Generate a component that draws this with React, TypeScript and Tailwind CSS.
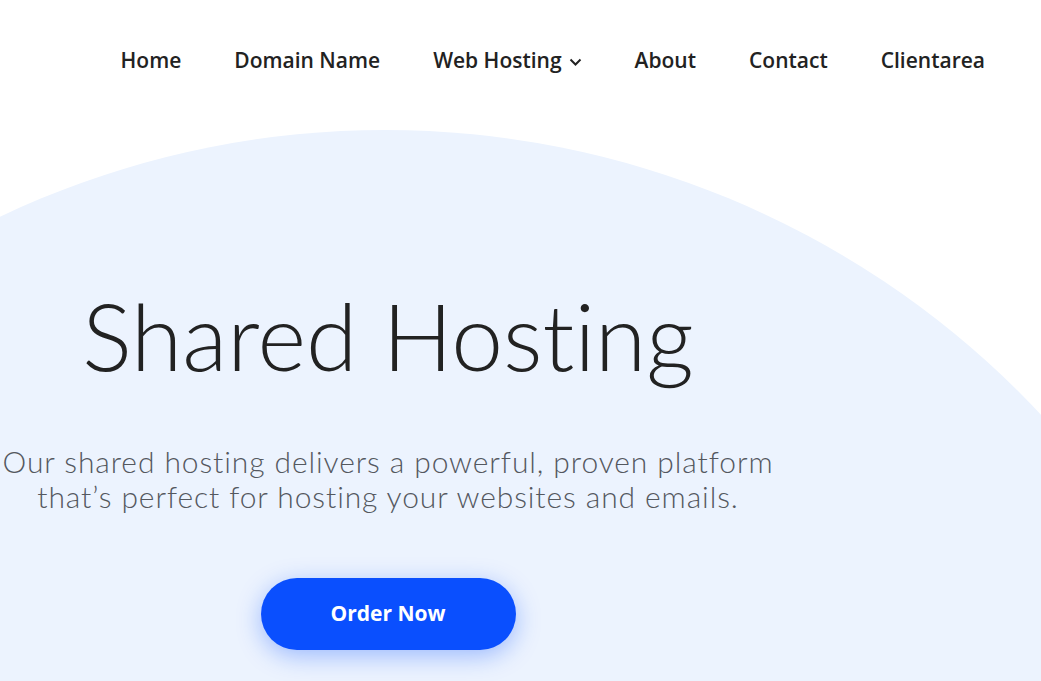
import React from "react";

export default function App() {
  const nav = ["Home", "Domain Name", "Web Hosting", "About", "Contact", "Clientarea"];
  return (
    <div className="relative h-[681px] w-full overflow-hidden bg-white">
      <div className="pointer-events-none absolute left-[-513px] top-[130px] h-[1796px] w-[1796px] rounded-full bg-[#ecf3fe]" />
      <div className="relative">
        <nav className="flex h-[122px] items-center justify-end gap-[53px] pr-[56px] font-['Open_Sans',sans-serif] text-[21px] font-semibold text-[#222222]">
          {nav.map((n) => (
            <a key={n} className="flex items-center gap-[7px]">
              <span>{n}</span>
              {n === "Web Hosting" && (
                <svg width="13" height="9" viewBox="0 0 13 9" fill="none" className="mt-[3px]">
                  <polyline points="1.5,1.5 6.5,6.5 11.5,1.5" stroke="#222" strokeWidth="2" />
                </svg>
              )}
            </a>
          ))}
        </nav>
        <div className="flex w-[776px] flex-col items-center text-center">
          <h1 className="mt-[167px] font-['Lato',sans-serif] text-[93px] font-light leading-none text-[#222222] [font-variant-ligatures:none]">
            Shared Hosting
          </h1>
          <p className="mt-[62px] whitespace-nowrap font-['Lato',sans-serif] text-[30px] font-light leading-[35px] tracking-[0.9px] text-[#54585f]">
            Our shared hosting delivers a powerful, proven platform
            <br />
            that’s perfect for hosting your websites and emails.
          </p>
          <button className="mt-[64px] h-[72px] w-[255px] rounded-full bg-[#0a4ffe] font-['Open_Sans',sans-serif] text-[21px] font-bold text-white shadow-[0_6px_24px_rgba(10,79,254,0.35)]">
            Order Now
          </button>
        </div>
      </div>
    </div>
  );
}
